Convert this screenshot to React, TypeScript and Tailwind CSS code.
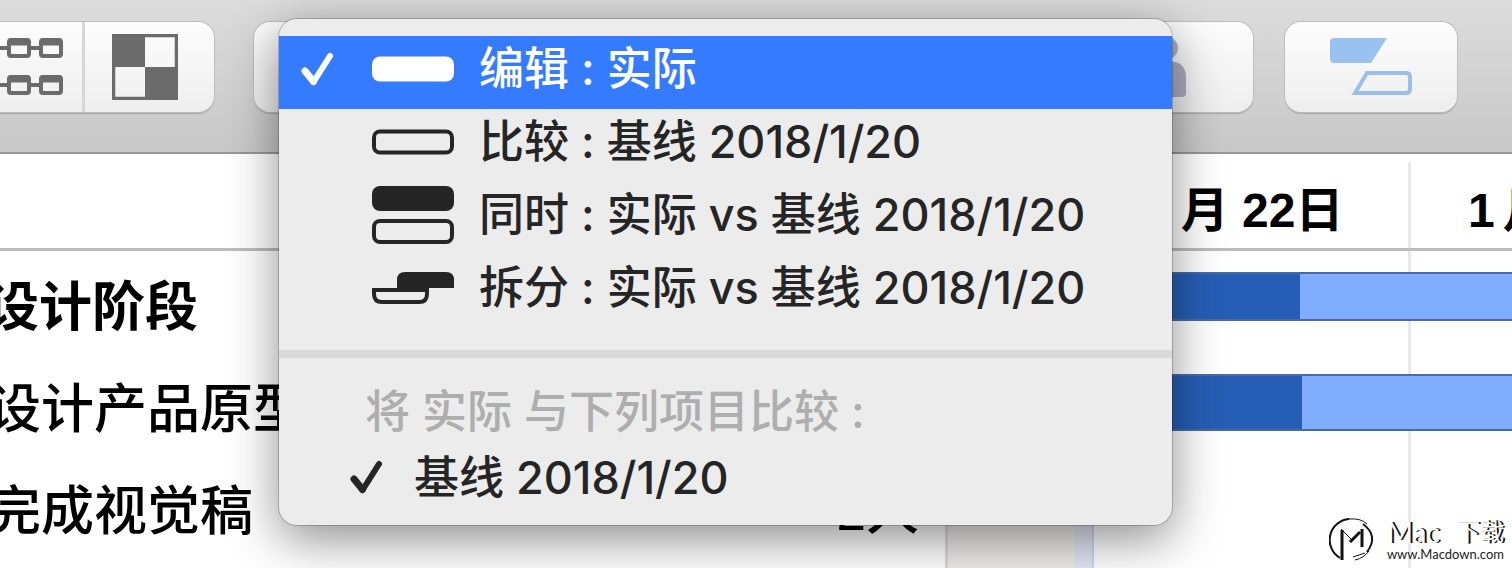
import type { ReactNode } from "react";
import clsx from "clsx";

const tasks = [
  { name: "设计阶段", people: "", group: true },
  { name: "设计产品原型", people: "", group: false },
  { name: "完成视觉稿", people: "2人", group: false },
];

const days = [
  { month: "1", day: "月 22日" },
  { month: "1", day: "月 23日" },
];

const CheckIcon = () => (
  <svg className="w-9 h-9 shrink-0" viewBox="0 0 36 36" fill="none" stroke="currentColor" strokeLinecap="round" strokeLinejoin="round">
    <path d="M5 20 L13.5 30.5" strokeWidth="7" />
    <path d="M13.5 31 L30 5" strokeWidth="6" />
  </svg>
);

const SolidIcon = () => (
  <svg className="w-[82px] h-[26px]" viewBox="0 0 82 26">
    <rect x="0" y="0.5" width="82" height="25" rx="8" fill="currentColor" />
  </svg>
);

const OutlineIcon = () => (
  <svg className="w-[82px] h-[26px]" viewBox="0 0 82 26">
    <rect x="2" y="2.5" width="78" height="21" rx="6" fill="none" stroke="currentColor" strokeWidth="4" />
  </svg>
);

const BothIcon = () => (
  <svg className="w-[82px] h-[58px]" viewBox="0 0 82 58">
    <rect x="0" y="0" width="82" height="25" rx="8" fill="currentColor" />
    <rect x="2" y="35" width="78" height="21" rx="6" fill="none" stroke="currentColor" strokeWidth="4" />
  </svg>
);

const SplitIcon = () => (
  <svg className="w-[82px] h-8" viewBox="0 0 82 32">
    <path d="M25 16 V8 Q25 0 33 0 H74 Q82 0 82 8 V16 Z" fill="currentColor" />
    <path d="M2 18 H55 V22 Q55 30 47 30 H10 Q2 30 2 22 Z" fill="none" stroke="currentColor" strokeWidth="4" />
  </svg>
);

const NetworkIcon = () => (
  <svg className="w-[76px] h-[58px] shrink-0" viewBox="0 0 76 58" fill="none" stroke="#6b6b6b">
    {[0, 37].map((y) => (
      <g key={y}>
        <path d={`M0 ${y + 10} H20 M43 ${y + 10} H53`} strokeWidth="4" />
        <rect x="21" y={y + 2} width="20" height="16" rx="2" strokeWidth="4" />
        <rect x="53" y={y + 2} width="20" height="16" rx="2" strokeWidth="4" />
        <path d={`M21 ${y + 4} H41 M53 ${y + 4} H73`} strokeWidth="7" />
      </g>
    ))}
  </svg>
);

const CheckerIcon = () => (
  <svg className="w-[66px] h-[66px]" viewBox="0 0 66 66" fill="#6b6b6b">
    <rect x="1.5" y="1.5" width="63" height="63" fill="none" stroke="#6b6b6b" strokeWidth="3.5" />
    <rect width="33" height="33" />
    <rect x="33" y="33" width="33" height="33" />
  </svg>
);

const PersonIcon = () => (
  <svg className="w-[38px] h-16" viewBox="0 0 38 64" fill="#a9b0bf">
    <circle cx="19" cy="13" r="11" />
    <path d="M0 60 V42 Q0 26 19 26 Q38 26 38 42 V58 Q38 62 34 62 H2 Z" />
  </svg>
);

const TimelineIcon = () => (
  <svg className="w-[84px] h-[60px]" viewBox="0 0 84 60">
    <path d="M5 1 H58 L42 26 H5 Q1 26 1 22 V5 Q1 1 5 1 Z" fill="#9ac2f0" />
    <path d="M38 36 H77 Q81 36 81 40 V52 Q81 56 77 56 H26 Z" fill="none" stroke="#9abfea" strokeWidth="4" />
  </svg>
);

type MenuItemProps = {
  icon: ReactNode;
  label: string;
  checked?: boolean;
};

const MenuItem = ({ icon, label, checked }: MenuItemProps) => (
  <button
    role="menuitemradio"
    aria-checked={!!checked}
    className={clsx(
      "flex w-full h-[73px] items-center pl-[21px] pb-2 text-left whitespace-nowrap",
      checked ? "bg-[#347bff] text-white" : "text-[#252525]"
    )}
  >
    <span className="w-[72px] shrink-0">{checked && <CheckIcon />}</span>
    <span className="w-[107px] shrink-0">{icon}</span>
    <span>{label}</span>
  </button>
);

const CompareMenu = () => (
  <div
    role="menu"
    className="absolute left-[279px] top-[19px] w-[893px] overflow-hidden rounded-[18px] bg-[#ececec] pt-[17px] pb-[15px] text-[45px] leading-none font-medium shadow-[0_0_0_1px_rgba(0,0,0,0.2),0_14px_50px_rgba(0,0,0,0.45)]"
  >
    <MenuItem checked icon={<SolidIcon />} label="编辑 : 实际" />
    <MenuItem icon={<OutlineIcon />} label="比较 : 基线 2018/1/20" />
    <MenuItem icon={<BothIcon />} label="同时 : 实际 vs 基线 2018/1/20" />
    <MenuItem icon={<SplitIcon />} label="拆分 : 实际 vs 基线 2018/1/20" />
    <div role="separator" className="mt-[22px] mb-5 h-2 bg-[#dadada]" />
    <div className="flex h-[66px] items-center pl-[86px] text-[#aeaeae] whitespace-nowrap">将 实际 与下列项目比较 :</div>
    <button role="menuitemcheckbox" aria-checked="true" className="flex w-full h-[66px] items-center pl-[70px] text-left text-[#252525] whitespace-nowrap">
      <span className="w-[65px] shrink-0"><CheckIcon /></span>
      <span>基线 2018/1/20</span>
    </button>
  </div>
);

const toolButton = "flex h-[90px] items-center bg-linear-to-b from-[#fdfdfd] to-[#eeeeee]";
const toolShadow = "rounded-2xl shadow-[0_0_0_1px_#bdbdbd,0_2px_1px_#a8a8a8]";

const Toolbar = () => (
  <header className="flex h-[154px] shrink-0 items-start justify-between border-b-2 border-[#979797] bg-linear-to-b from-[#dcdcdc] to-[#c8c8c8] pt-[22px] pr-[55px]">
    <div className="flex gap-10">
      <div className={clsx("flex w-[214px] overflow-hidden rounded-l-none", toolShadow)}>
        <button aria-label="网络视图" className={clsx(toolButton, "w-[85px] justify-end border-r-3 border-[#d6d6d6] pr-[18px]")}>
          <NetworkIcon />
        </button>
        <button aria-label="样式视图" className={clsx(toolButton, "flex-1 justify-center pr-[10px]")}>
          <CheckerIcon />
        </button>
      </div>
      <button aria-label="比较" className={clsx(toolButton, toolShadow, "w-[172px]")} />
    </div>
    <div className="flex gap-8">
      <button aria-label="资源" className={clsx(toolButton, toolShadow, "w-[172px] justify-center")}>
        <PersonIcon />
      </button>
      <button aria-label="基线" className={clsx(toolButton, toolShadow, "w-[172px] justify-center")}>
        <TimelineIcon />
      </button>
    </div>
  </header>
);

const TaskTable = () => (
  <div className="w-[945px] shrink-0 overflow-hidden">
    <div className="h-[97px] border-b-3 border-[#bcbcbc]" />
    <table className="mt-[5px] w-full text-[53px] leading-none text-black">
      <tbody>
        {tasks.map((task) => (
          <tr key={task.name} className="h-[102px]">
            <td className="p-0 whitespace-nowrap">
              <div className={clsx(task.group ? "-ml-3.5 font-bold" : "-ml-3 font-medium")}>{task.name}</div>
            </td>
            <td className="p-0 pr-[26px] text-right font-medium">{task.people}</td>
          </tr>
        ))}
      </tbody>
    </table>
  </div>
);

const Timeline = () => (
  <div className="relative flex flex-1 flex-col overflow-hidden">
    {/* day columns behind the bars */}
    <div className="absolute inset-0 flex pt-2">
      <div className="w-[130px] shrink-0 border-l-3 border-[#d8d8dc] bg-[#eeece9]" />
      <div className="w-[19px] shrink-0 border-r-2 border-[#d3d6f2] bg-[#e3e6f6]" />
      <div className="w-[317px] shrink-0 border-r-3 border-[#e9e9eb]" />
    </div>
    <div className="relative flex h-[97px] shrink-0 border-b-3 border-[#bcbcbc] pl-[149px] pt-[33px]">
      {days.map(({ month, day }) => (
        <div key={day} className="flex w-[322px] shrink-0 gap-2 pl-[52px] text-5xl leading-none font-bold whitespace-nowrap text-black">
          <span>{month}</span>
          <span>{day}</span>
        </div>
      ))}
    </div>
    <div className="relative pt-[21px] pl-[160px]">
      <div className="flex h-[49px] border-y-2 border-[#4a69a8] bg-[#80adff]">
        <div className="w-[195px] bg-[#265eb5]" />
      </div>
      <div className="mt-[53px] flex h-[57px] border-y-2 border-[#4a69a8] bg-[#80adff]">
        <div className="w-[197px] bg-[#265eb5]" />
      </div>
    </div>
  </div>
);

const Watermark = () => (
  <div className="absolute right-2 bottom-1.5 flex items-center gap-3 font-[Lato,'Noto_Sans_CJK_SC',sans-serif]">
    <svg className="w-[46px] h-[44px]" viewBox="0 0 46 44" fill="none" stroke="#111">
      <path d="M20 1 A21 21 0 0 0 11 40" strokeWidth="2" />
      <path d="M20 1 Q32 0 38 6" strokeWidth="1" />
      <path d="M34 6 Q50 18 38 34" strokeWidth="2" />
      <path d="M26 42 Q35 40 40 33 M24 39 L36 35" strokeWidth="1" />
      <path d="M13 12 V42 M33 11 V29" strokeWidth="3" />
      <path d="M12 11 L22 21" strokeWidth="1" />
      <path d="M21 24 L31 14" strokeWidth="3" />
    </svg>
    <div>
      <div className="flex items-center justify-between text-2xl leading-7 text-white [text-shadow:1px_0_0_#111,2px_0_0_#111]">
        <span className="text-[28px]">Mac</span>
        <span>下载</span>
      </div>
      <div className="text-[13px] leading-4 text-[#222]">www.Macdown.com</div>
    </div>
  </div>
);

export default function App() {
  return (
    <div lang="zh-CN" className="relative flex h-screen flex-col overflow-hidden bg-white font-['Liberation_Sans','Noto_Sans_CJK_SC',sans-serif]">
      <Toolbar />
      <main className="flex min-h-0 flex-1">
        <TaskTable />
        <Timeline />
      </main>
      <div className="font-[Inter,'Noto_Sans_CJK_SC',sans-serif]">
        <CompareMenu />
      </div>
      <Watermark />
    </div>
  );
}
